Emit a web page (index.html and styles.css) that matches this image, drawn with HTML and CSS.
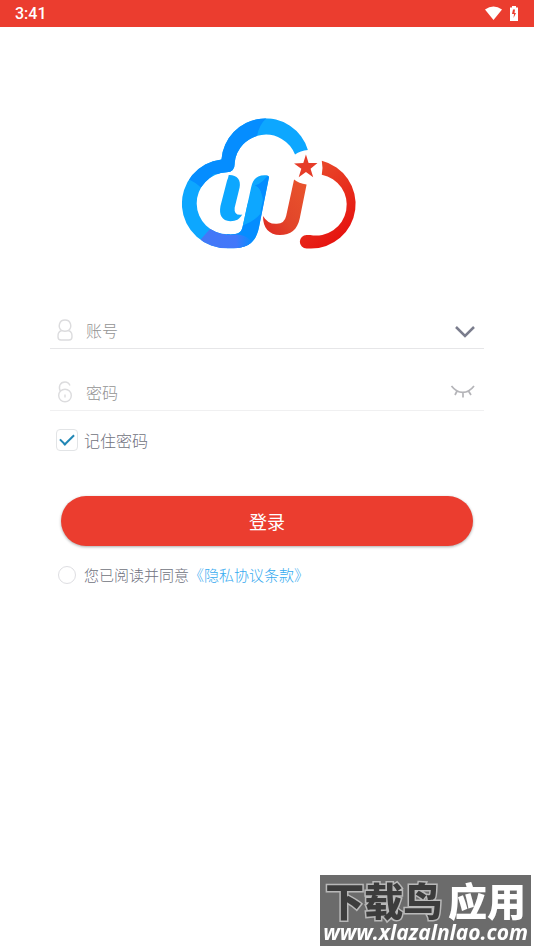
FILE: index.html
```html
<!DOCTYPE html>
<html lang="zh-CN">
<head>
<meta charset="utf-8">
<meta name="viewport" content="width=device-width, initial-scale=1">
<title>登录</title>
<link rel="stylesheet" href="styles.css">
</head>
<body>
<header class="status">
  <time>3:41</time>
  <div class="status-icons">
    <svg width="18" height="15" viewBox="0 0 18 15" aria-hidden="true"><path fill="#fff" d="M0 3.500Q8.500-2.500 17 3.500L8.500 14Z"/></svg>
    <svg width="9" height="15" viewBox="0 0 9 15" aria-hidden="true"><path fill="#fff" d="M2 0h4v1.500H8V15H0V1.500h2z"/><path fill="#eb3d2f" d="M5 3.500H3L2 8h2L3.500 12L6 7H4.500z"/></svg>
  </div>
</header>
<main class="page">
  <svg class="logo" viewBox="-12 -4 606 470" role="img" aria-label="云标志">
    <defs>
      <clipPath id="cloud"><path d="M415 132Q392 134 376 146A95 95 0 0 0 193 172Q194 200 169 200A95 94 0 0 0 78 295A95 94 0 0 0 173 388C202 389 213 384 217 365L243 245C250 216 264 207 290 209Q297 210 297 215L267 365C259 405 240 430 190 430H173A136 135 0 0 1 153 161A134 134 0 0 1 415 132Z"/></clipPath>
      <linearGradient id="red" x1="0" y1="0" x2="0.500" y2="1"><stop offset="0" stop-color="#e9532f"/><stop offset="1" stop-color="#e6130f"/></linearGradient>
      <linearGradient id="hook" x1="1" y1="0" x2="0" y2="1"><stop offset="0" stop-color="#e9552d"/><stop offset="0.600" stop-color="#e2452a"/><stop offset="1" stop-color="#df2722"/></linearGradient>
      <linearGradient id="violet" x1="0" y1="0" x2="1" y2="0"><stop offset="0" stop-color="#4478f6"/><stop offset="0.700" stop-color="#4278fa"/><stop offset="1" stop-color="#088cff"/></linearGradient>
    </defs>
    <g clip-path="url(#cloud)">
      <path fill="#0da7ff" d="M0 0h600v465H0z"/>
      <path fill="#058dff" d="M295 30Q266 55 261 90L200 205H130L92 247Q75 230 52 220L30 100L180 20Z"/>
      <path fill="#058dff" d="M254 240Q278 235 300 200V465H170V370Q238 365 272 325V258Q266 245 254 240Z"/>
      <path fill="#0da7ff" d="M254 240Q272 245 279 283L269 325Q245 355 205 360Z"/>
      <path fill="url(#violet)" d="M85 410Q105 385 120 370Q146 390 190 389Q223 386 246 410L240 440H85Z"/>
    </g>
    <path fill="#0da7ff" d="M175 208C200 207 213 223 208 246L193 307Q190 332 216 328C207 343 198 348 180 348C154 347 145 329 150 302L170 225Q174 215 175 208Z"/>
    <path fill="url(#hook)" d="M373 222Q387 234 411 237L390 341C383 374 363 390 330 390C298 389 278 368 279 332Q294 358 321 356Q344 355 349 332Z"/>
    <path fill="url(#red)" d="M457 165A135 135 0 0 1 422 431H411A20 20 0 0 1 411 390H422A93 93 0 0 0 457 207Q461 185 457 165Z"/>
    <path fill="#e63c28" d="M409 146L417 172H444L423 189L431 215L409 199L387 215L395 189L373 173L401 172Z"/>
  </svg>
  <form class="form">
    <div class="field">
      <label for="account"><svg class="field-icon" viewBox="0 0 16 22" role="img" aria-label="账号"><path d="M4.500 11.500C0.500 8 2 1 8 1s7.500 7 3.500 10.500Q8 13 4.500 11.500C1 13 1 15 1 18q0 3 3 3h8q3 0 3-3c0-3 0-5-3.500-6.500"/></svg></label>
      <input id="account" type="text" placeholder="账号" autocomplete="username">
      <button class="tool" type="button" aria-label="展开账号"><svg width="28" height="24" viewBox="0 0 28 24"><path fill="none" stroke="#7b7d8d" stroke-width="2.500" d="M6 9L15 18L24 9"/></svg></button>
    </div>
    <div class="field password">
      <label for="password"><svg class="field-icon" viewBox="0 0 16 22" role="img" aria-label="密码"><path d="M3.500 10.500C1 6 3 1 8 1Q11.500 1 13 4.500M8 13.500v3"/><circle cx="8" cy="14.500" r="6.300"/></svg></label>
      <input id="password" type="password" placeholder="密码" autocomplete="current-password">
      <button class="tool" type="button" aria-label="显示密码"><svg width="28" height="24" viewBox="0 0 28 24"><path fill="none" stroke="#b4b4b8" stroke-width="1.700" d="M1.500 6C8 14.500 17.500 14.500 24 6M7 11l-2 4M13 12.500v5M18.500 11l2.500 4"/></svg></button>
    </div>
    <div class="remember"><input id="remember" type="checkbox" checked><label for="remember">记住密码</label></div>
    <button class="login" type="submit">登录</button>
    <div class="terms"><input id="agree" type="radio"><label for="agree">您已阅读并同意</label><a href="#terms">《隐私协议条款》</a></div>
  </form>
</main>
<aside class="mark">
  <div class="mark-name"><span class="mark-dark">下载鸟</span><span>应用</span></div>
  <div class="mark-url">www.xlazalnlao.com</div>
</aside>
</body>
</html>
```
FILE: styles.css
```css
* { box-sizing: border-box; }
body {
  margin: 0;
  min-height: 100vh;
  background: #fff;
  color: #707280;
  font: 16px/24px "Noto Sans CJK SC", sans-serif;
}
input, button { font: inherit; margin: 0; }
.status {
  display: flex;
  justify-content: space-between;
  align-items: center;
  height: 27px;
  padding: 0 15px;
  background: #eb3d2f;
  color: #fff;
  font: 500 16px/27px Roboto, sans-serif;
}
.status-icons { display: flex; gap: 7px; }
.page { padding: 78px 50px 0; }
.logo { display: block; width: 200px; margin: 0 auto; }
.form { padding-top: 50px; }
.field {
  display: flex;
  align-items: center;
  height: 39px;
  padding: 1px 6px 0 7px;
  border-bottom: 1px solid #e6e6e8;
}
.field.password {
  margin-top: 23px;
  border-color: #f0f0f1;
}
.field-icon {
  display: block;
  width: 16px;
  height: 22px;
  fill: none;
  stroke: #dcdcde;
  stroke-width: 1.4;
}
.field input {
  flex: 1;
  min-width: 0;
  height: 32px;
  padding: 0 0 0 13px;
  border: 0;
  outline: 0;
  background: none;
  color: #666;
  font-weight: 300;
}
.field input::placeholder { color: #929292; opacity: 1; }
.tool {
  width: 28px;
  padding: 0;
  border: 0;
  background: none;
}
.tool svg { display: block; }
.remember, .terms { display: flex; align-items: center; }
.remember { gap: 6px; padding: 17px 6px 0; font-weight: 300; }
.remember input {
  appearance: none;
  width: 22px;
  height: 22px;
  border: 1px solid #e2e4e6;
  border-radius: 4px;
  display: grid;
  place-items: center;
}
.remember input:checked::before {
  content: "";
  width: 12px;
  height: 6px;
  margin-bottom: 4px;
  border: solid #2187b5;
  border-width: 0 0 2px 2px;
  transform: rotate(-45deg);
}
.login {
  display: block;
  width: calc(100% - 22px);
  height: 50px;
  margin: 44px auto 0;
  padding: 0;
  border: 0;
  border-radius: 25px;
  background: #eb3d2f;
  box-shadow: 0 1px 3px #0005;
  color: #fff;
  font-size: 18px;
}
.terms { padding: 17px 8px 0; font-size: 15px; font-weight: 300; }
.terms input {
  appearance: none;
  width: 18px;
  height: 18px;
  margin-right: 8px;
  border: 1px solid #dedee2;
  border-radius: 50%;
}
.terms input:checked { background: #eb3d2f; }
.terms a { color: #36aaf0; text-decoration: none; }
.mark {
  position: fixed;
  right: 3px;
  bottom: 4px;
  padding: 3px 3px 2px;
  background: #6b6b6b;
  color: #fff;
  white-space: nowrap;
}
.mark-name {
  display: flex;
  justify-content: space-between;
  padding: 0 2px;
  font-size: 39px;
  line-height: 43px;
  font-weight: 900;
}
.mark-dark {
  color: #3c3c3c;
  -webkit-text-stroke: 3px #b8b8b8;
  paint-order: stroke fill;
}
.mark-url { font: italic 700 21px/23px "Open Sans", sans-serif; }
```
